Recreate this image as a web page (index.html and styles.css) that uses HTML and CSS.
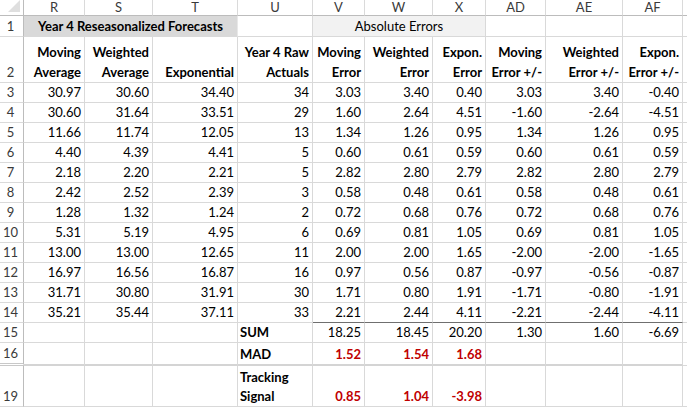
FILE: index.html
```html
<!DOCTYPE html>
<html>
<head>
<meta charset="utf-8">
<link rel="stylesheet" href="styles.css">
</head>
<body>
<div class="sheet">
  <div class="corner"><span class="tri"></span></div>
  <div class="ch">R</div><div class="ch">S</div><div class="ch">T</div><div class="ch">U</div><div class="ch">V</div><div class="ch">W</div><div class="ch">X</div><div class="ch">AD</div><div class="ch">AE</div><div class="ch">AF</div><div class="ch end"></div>

  <div class="rh">1</div>
  <div class="c title span3">Year 4 Reseasonalized Forecasts</div>
  <div class="c"></div>
  <div class="c abs span3">Absolute Errors</div>
  <div class="c"></div><div class="c"></div><div class="c"></div><div class="c end"></div>

  <div class="rh">2</div>
  <div class="c h">Moving<br>Average</div>
  <div class="c h">Weighted<br>Average</div>
  <div class="c h">Exponential</div>
  <div class="c h">Year 4 Raw<br>Actuals</div>
  <div class="c h">Moving<br>Error</div>
  <div class="c h">Weighted<br>Error</div>
  <div class="c h">Expon.<br>Error</div>
  <div class="c h">Moving<br>Error +/-</div>
  <div class="c h">Weighted<br>Error +/-</div>
  <div class="c h">Expon.<br>Error +/-</div>
  <div class="c end"></div>

  <div class="rh">3</div><div class="c">30.97</div><div class="c">30.60</div><div class="c">34.40</div><div class="c">34</div><div class="c">3.03</div><div class="c">3.40</div><div class="c">0.40</div><div class="c">3.03</div><div class="c">3.40</div><div class="c">-0.40</div><div class="c end"></div>
  <div class="rh">4</div><div class="c">30.60</div><div class="c">31.64</div><div class="c">33.51</div><div class="c">29</div><div class="c">1.60</div><div class="c">2.64</div><div class="c">4.51</div><div class="c">-1.60</div><div class="c">-2.64</div><div class="c">-4.51</div><div class="c end"></div>
  <div class="rh">5</div><div class="c">11.66</div><div class="c">11.74</div><div class="c">12.05</div><div class="c">13</div><div class="c">1.34</div><div class="c">1.26</div><div class="c">0.95</div><div class="c">1.34</div><div class="c">1.26</div><div class="c">0.95</div><div class="c end"></div>
  <div class="rh">6</div><div class="c">4.40</div><div class="c">4.39</div><div class="c">4.41</div><div class="c">5</div><div class="c">0.60</div><div class="c">0.61</div><div class="c">0.59</div><div class="c">0.60</div><div class="c">0.61</div><div class="c">0.59</div><div class="c end"></div>
  <div class="rh">7</div><div class="c">2.18</div><div class="c">2.20</div><div class="c">2.21</div><div class="c">5</div><div class="c">2.82</div><div class="c">2.80</div><div class="c">2.79</div><div class="c">2.82</div><div class="c">2.80</div><div class="c">2.79</div><div class="c end"></div>
  <div class="rh">8</div><div class="c">2.42</div><div class="c">2.52</div><div class="c">2.39</div><div class="c">3</div><div class="c">0.58</div><div class="c">0.48</div><div class="c">0.61</div><div class="c">0.58</div><div class="c">0.48</div><div class="c">0.61</div><div class="c end"></div>
  <div class="rh">9</div><div class="c">1.28</div><div class="c">1.32</div><div class="c">1.24</div><div class="c">2</div><div class="c">0.72</div><div class="c">0.68</div><div class="c">0.76</div><div class="c">0.72</div><div class="c">0.68</div><div class="c">0.76</div><div class="c end"></div>
  <div class="rh">10</div><div class="c">5.31</div><div class="c">5.19</div><div class="c">4.95</div><div class="c">6</div><div class="c">0.69</div><div class="c">0.81</div><div class="c">1.05</div><div class="c">0.69</div><div class="c">0.81</div><div class="c">1.05</div><div class="c end"></div>
  <div class="rh">11</div><div class="c">13.00</div><div class="c">13.00</div><div class="c">12.65</div><div class="c">11</div><div class="c">2.00</div><div class="c">2.00</div><div class="c">1.65</div><div class="c">-2.00</div><div class="c">-2.00</div><div class="c">-1.65</div><div class="c end"></div>
  <div class="rh">12</div><div class="c">16.97</div><div class="c">16.56</div><div class="c">16.87</div><div class="c">16</div><div class="c">0.97</div><div class="c">0.56</div><div class="c">0.87</div><div class="c">-0.97</div><div class="c">-0.56</div><div class="c">-0.87</div><div class="c end"></div>
  <div class="rh">13</div><div class="c">31.71</div><div class="c">30.80</div><div class="c">31.91</div><div class="c">30</div><div class="c">1.71</div><div class="c">0.80</div><div class="c">1.91</div><div class="c">-1.71</div><div class="c">-0.80</div><div class="c">-1.91</div><div class="c end"></div>
  <div class="rh">14</div><div class="c">35.21</div><div class="c">35.44</div><div class="c">37.11</div><div class="c">33</div><div class="c tot">2.21</div><div class="c tot">2.44</div><div class="c tot">4.11</div><div class="c tot">-2.21</div><div class="c tot">-2.44</div><div class="c tot">-4.11</div><div class="c end"></div>

  <div class="rh">15</div><div class="c"></div><div class="c"></div><div class="c"></div><div class="c lbl">SUM</div><div class="c">18.25</div><div class="c">18.45</div><div class="c">20.20</div><div class="c">1.30</div><div class="c">1.60</div><div class="c">-6.69</div><div class="c end"></div>
  <div class="rh hid">16</div><div class="c hidc"></div><div class="c hidc"></div><div class="c hidc"></div><div class="c lbl hidc">MAD</div><div class="c red hidc">1.52</div><div class="c red hidc">1.54</div><div class="c red hidc">1.68</div><div class="c hidc"></div><div class="c hidc"></div><div class="c hidc"></div><div class="c end"></div>
  <div class="rh">19</div><div class="c"></div><div class="c"></div><div class="c"></div><div class="c lbl">Tracking<br>Signal</div><div class="c red">0.85</div><div class="c red">1.04</div><div class="c red">-3.98</div><div class="c"></div><div class="c"></div><div class="c"></div><div class="c end"></div>
</div>
</body>
</html>
```

FILE: styles.css
```css
html, body {
  margin: 0;
  padding: 0;
  background: #ffffff;
}

.sheet {
  display: grid;
  grid-template-columns: 24px 61px 68px 85px 75px 52px 68px 53px 60px 77px 60px 4px;
  grid-template-rows: 16px 21px 46px repeat(13, 20px) 23px 41px;
  font-family: Lato, "Open Sans", sans-serif;
  font-size: 13px;
  color: #000000;
  width: 687px;
}

.corner {
  position: relative;
  border-right: 1px solid #bcbcbc;
  border-bottom: 1px solid #bcbcbc;
  box-sizing: border-box;
}

.tri {
  position: absolute;
  right: 3px;
  bottom: 3px;
  width: 0;
  height: 0;
  border-left: 12px solid transparent;
  border-bottom: 12px solid #dfdfdf;
}

.ch {
  box-sizing: border-box;
  border-right: 1px solid #dadada;
  border-bottom: 1px solid #bcbcbc;
  display: flex;
  align-items: center;
  justify-content: center;
  color: #3a3a3a;
  font-size: 13px;
  line-height: 15px;
}

.ch.end {
  border-right: none;
}

.rh {
  box-sizing: border-box;
  border-right: 1px solid #bcbcbc;
  border-bottom: 1px solid #dadada;
  display: flex;
  align-items: flex-end;
  justify-content: center;
  padding: 0 2px 0 0;
  color: #3a3a3a;
  line-height: 19px;
}

.c {
  box-sizing: border-box;
  border-right: 1px solid #d9d9d9;
  border-bottom: 1px solid #d9d9d9;
  display: flex;
  align-items: flex-end;
  justify-content: flex-end;
  text-align: right;
  padding: 0 3px 0 2px;
  line-height: 19px;
  white-space: nowrap;
}

.c.end {
  border-right: none;
  padding: 0;
}

.span3 {
  grid-column: span 3;
}

.title {
  background: #d9d9d9;
  font-weight: bold;
  justify-content: center;
  padding: 0;
  border-right: 1px solid #e8e8e8;
}

.abs {
  background: #f2f2f2;
  justify-content: center;
  padding: 0;
}

.h {
  font-weight: bold;
  line-height: 20px;
}

.tot {
  border-bottom: 1px solid #6f6f6f;
}

.lbl {
  font-weight: bold;
  justify-content: flex-start;
  text-align: left;
  padding-left: 2px;
}

.red {
  color: #c00000;
  font-weight: bold;
}

.hid {
  border-bottom: 3px double #c8c8c8;
}

.hidc {
  border-bottom: 2px solid #d4d4d4;
}
```
